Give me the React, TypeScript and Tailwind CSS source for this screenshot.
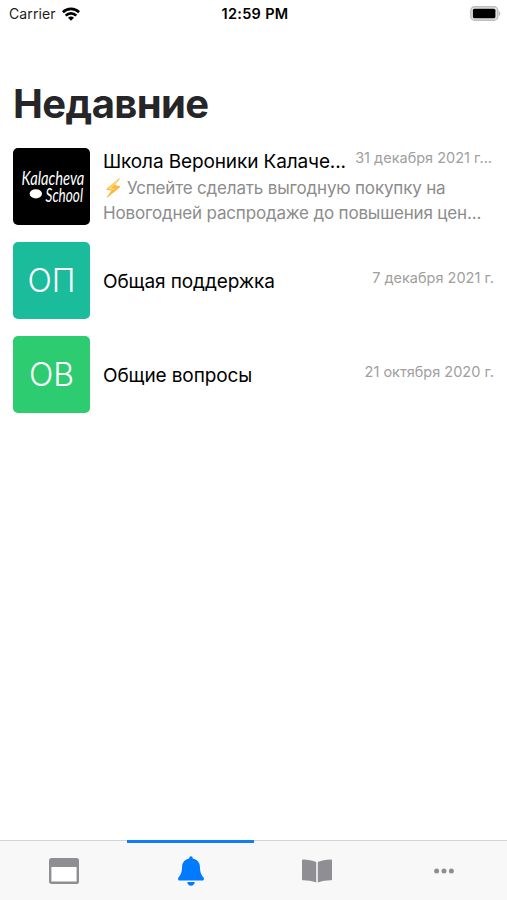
import React from 'react';

interface Chat {
  id: number;
  title: string;
  date: string;
  initials: string;
  color: string;
}

const chats: Chat[] = [
  { id: 1, title: 'Общая поддержка', date: '7 декабря 2021 г.', initials: 'ОП', color: 'bg-[#1abc9c]' },
  { id: 2, title: 'Общие вопросы', date: '21 октября 2020 г.', initials: 'ОВ', color: 'bg-[#2ecc71]' },
];

const StatusBar: React.FC = () => (
  <div className="grid grid-cols-3 items-center h-[27px] pl-[9px] pr-[6px] text-[14px] text-[#1c1c1c]">
    <div className="flex items-center gap-[6px]">
      <span className="tracking-[0.1px]">Carrier</span>
      <svg className="w-[18px] h-[14px]" viewBox="0 0 18 14" fill="none" stroke="#000" strokeWidth="2.7">
        <path d="M0.9 5.2a11.5 11.5 0 0 1 16.2 0" />
        <path d="M3.7 8.6a7.4 7.4 0 0 1 10.6 0" />
        <path d="M9 13.8L6 10.8a4.2 4.2 0 0 1 6 0z" fill="#000" stroke="none" />
      </svg>
    </div>
    <span className="text-center text-[14.5px] tracking-[0.3px] font-semibold whitespace-nowrap text-black">12:59 PM</span>
    <svg className="w-[31px] h-[15px] justify-self-end" viewBox="0 0 31 15">
      <rect x="0.8" y="0.8" width="27" height="13.4" rx="3.8" fill="#e4e4e4" stroke="#bdbdbd" strokeWidth="1.4" />
      <rect x="2.9" y="2.8" width="22.5" height="9.4" rx="1.5" fill="#000" />
      <path d="M28.8 5v5c2-.8 2-4.2 0-5z" fill="#bdbdbd" />
    </svg>
  </div>
);

const SchoolLogo: React.FC = () => (
  <svg className="w-[77px] h-[77px] shrink-0 rounded-[5px] bg-black" viewBox="0 0 77 77">
    <g fill="#fff" fontFamily="Lato, sans-serif" fontStyle="italic" fontSize="15.5">
      <text transform="translate(8.5 37) scale(0.95 1.2)">Kalacheva</text>
      <text transform="translate(32.5 53.500) scale(0.880 1.200)">School</text>
    </g>
    <ellipse cx="22.8" cy="45.8" rx="6.2" ry="4.6" fill="#fff" />
  </svg>
);

const Bolt: React.FC = () => (
  <svg className="inline-block w-[19px] h-[20px] mr-[5px] align-[-4px]" viewBox="0 0 19 20">
    <path d="M16.5 0.5L3.5 11.2l5.4 1.2L4 19.5 17.2 8.7l-5.6-1.4z" fill="#fdb93a" stroke="#f7a51c" strokeWidth="0.5" />
    <path d="M14 3.5L6.5 10.4l4.6.9" fill="none" stroke="#ffdc83" strokeWidth="1.2" />
  </svg>
);

const ChatRow: React.FC<{ chat: Chat }> = ({ chat }) => (
  <div className="flex h-[77px] gap-[13px]">
    <div className={`w-[77px] h-[77px] shrink-0 rounded-[5px] flex items-center justify-center pt-[1px] text-white text-[32px] font-light ${chat.color}`}>
      {chat.initials}
    </div>
    <div className="flex-1 flex items-center justify-between">
      <span className="text-[19px] tracking-[-0.1px] text-black whitespace-nowrap pt-[3px]">{chat.title}</span>
      <span className="text-[14.5px] text-[#a0a0a0] whitespace-nowrap pb-[5px]">{chat.date}</span>
    </div>
  </div>
);

const TabBar: React.FC = () => (
  <div className="grid grid-cols-4 h-[60px] bg-[#f8f8f8] border-t border-[#d5d5d7] text-[#8e8e93]">
    <div className="flex items-center justify-center pl-[2px]">
      <svg className="w-[30px] h-[26px]" viewBox="0 0 30 26">
        <rect x="1.2" y="1.2" width="27.6" height="23.6" rx="1.4" fill="#fff" stroke="currentColor" strokeWidth="2.4" />
        <path d="M1 1h28v8H1z" fill="currentColor" />
      </svg>
    </div>
    <div className="flex items-center justify-center -mt-px pl-[2px] border-t-[3px] border-[#107cf5] text-[#007aff]">
      <svg className="w-[26px] h-[30px] -mt-[2px]" viewBox="0 0 26 30" fill="currentColor">
        <path d="M13 .3c-1 0-1.700.7-1.700 1.700v.6C7 3.500 4.300 6.500 4.100 10.500 3.900 15.500 3.400 18 .5 21.600c-1 1.400-.4 2.900 1 2.900h23c1.400 0 2-1.500 1-2.900-2.900-3.600-3.400-6.100-3.600-11.100C21.700 6.500 19 3.500 14.700 2.600V2c0-1-.7-1.700-1.700-1.700z" />
        <path d="M9.300 26h7.400c0 2-1.500 3.700-3.700 3.700S9.300 28 9.300 26z" />
      </svg>
    </div>
    <div className="flex items-center justify-center">
      <svg className="w-[30px] h-[24px]" viewBox="0 0 30 24" fill="currentColor">
        <path d="M0 1.800C0 1 .5.600 1.300.600 6 .7 10.500 1.500 14.200 3v20.500C10 22 6 21.300 1 21.200c-.6 0-1-.4-1-1z" />
        <path d="M30 1.800c0-.8-.5-1.200-1.300-1.200C24 .7 19.500 1.500 15.800 3v20.500c4.200-1.500 8.200-2.200 13.200-2.300.6 0 1-.4 1-1z" />
      </svg>
    </div>
    <div className="flex items-center justify-center">
      <svg className="w-[20px] h-[6px]" viewBox="0 0 20 6" fill="currentColor">
        <circle cx="2.6" cy="3" r="2.5" />
        <circle cx="10" cy="3" r="2.5" />
        <circle cx="17.4" cy="3" r="2.5" />
      </svg>
    </div>
  </div>
);

const App: React.FC = () => {
  return (
    <div className="w-[507px] h-[900px] flex flex-col bg-white overflow-hidden font-[Inter,sans-serif]">
      <StatusBar />
      <main className="flex-1 px-[13px] pt-[53px]">
        <h1 className="text-[40px] leading-[48px] tracking-[-0.6px] font-bold text-[#262628]">Недавние</h1>

        <div className="flex flex-col gap-[17px] mt-[20px]">
          <div className="flex h-[77px] gap-[13px]">
            <SchoolLogo />
            <div className="flex-1 min-w-0">
              <div className="flex justify-between h-[28px]">
                <span className="text-[19px] leading-[27px] tracking-[-0.12px] text-black whitespace-nowrap">Школа Вероники Калаче...</span>
                <span className="text-[14.5px] leading-[20px] text-[#a0a0a0] whitespace-nowrap pr-[2px]">31 декабря 2021 г...</span>
              </div>
              <p className="text-[17px] leading-[25px] tracking-[-0.17px] text-[#8c8c8c] whitespace-nowrap">
                <Bolt />Успейте сделать выгодную покупку на
                <br />
                Новогодней распродаже до повышения цен...
              </p>
            </div>
          </div>
          {chats.map((chat) => (
            <ChatRow key={chat.id} chat={chat} />
          ))}
        </div>
      </main>
      <TabBar />
    </div>
  );
};

export default App;
